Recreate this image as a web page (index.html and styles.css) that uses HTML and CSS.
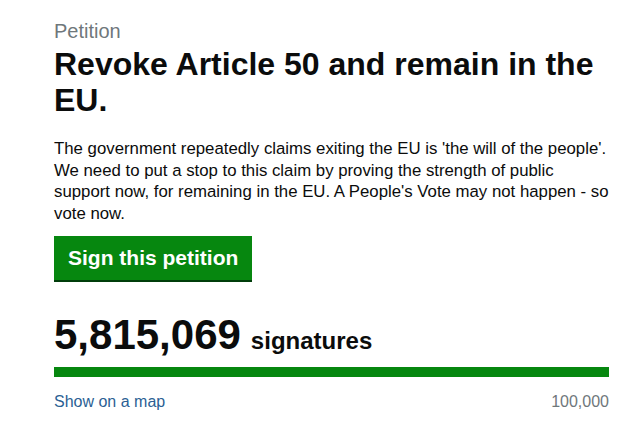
FILE: index.html
```html
<!DOCTYPE html>
<html lang="en">

<head>
  <meta charset="UTF-8">
  <meta name="viewport" content="width=device-width, initial-scale=1.0">
  <title>Revoke Article 50 and remain in the EU.</title>
  <link rel="stylesheet" href="styles.css">
</head>

<body>
  <div class="petition">
    <p class="petition-label">Petition</p>
    <h1 class="petition-title">Revoke Article 50 and remain in the EU.</h1>

    <p class="petition-text">
      The government repeatedly claims exiting the EU is 'the will of the people'. We need to put a stop to this claim by proving the strength of public support now, for remaining in the EU. A People's Vote may not happen - so vote now.
    </p>

    <a href="#" class="sign-button">Sign this petition</a>

    <!-- signature count and progress bar -->
    <div class="signature-count">
      <span class="count">5,815,069</span>
      <span class="count-label">signatures</span>
    </div>
    <div class="progress">
      <div class="progress-bar" style="width: 100%;"></div>
    </div>
    <div class="progress-footer">
      <a href="#" class="map-link">Show on a map</a>
      <span class="threshold">100,000</span>
    </div>
  </div>
</body>

</html>
```

FILE: styles.css
```css
body {
  font-family: "Liberation Sans", Arial, sans-serif;
  background-color: #ffffff;
  color: #0b0c0c;
  margin: 0;
  padding: 0;
}

.petition {
  width: 555px;
  padding: 21px 0 0 54px;
}

.petition-label {
  font-size: 20px;
  line-height: 20px;
  color: #6f777b;
  margin: 0;
}

.petition-title {
  font-size: 32px;
  line-height: 36px;
  font-weight: bold;
  margin: 5px 0 0 0;
}

.petition-text {
  font-size: 16.8px;
  line-height: 21.5px;
  margin: 20px 0 0 0;
}

.sign-button {
  display: inline-block;
  background-color: #06870f;
  color: #ffffff;
  font-size: 21px;
  font-weight: bold;
  line-height: 44px;
  padding: 0 14px;
  margin-top: 12px;
  text-decoration: none;
  box-shadow: 0 2px 0 #003d0a;
}

.signature-count {
  display: flex;
  align-items: baseline;
  gap: 10px;
  margin-top: 31px;
  line-height: 48px;
}

.count {
  font-size: 42px;
  font-weight: bold;
}

.count-label {
  font-size: 24px;
  font-weight: bold;
}

.progress {
  height: 10px;
  margin-top: 2px;
  background-color: #dee0e2;
}

.progress-bar {
  height: 100%;
  background-color: #06870f;
}

.progress-footer {
  display: flex;
  justify-content: space-between;
  font-size: 16px;
  line-height: 22px;
  margin-top: 14px;
}

.map-link {
  color: #2b5f94;
  text-decoration: none;
}

.threshold {
  color: #6f777b;
}
```
